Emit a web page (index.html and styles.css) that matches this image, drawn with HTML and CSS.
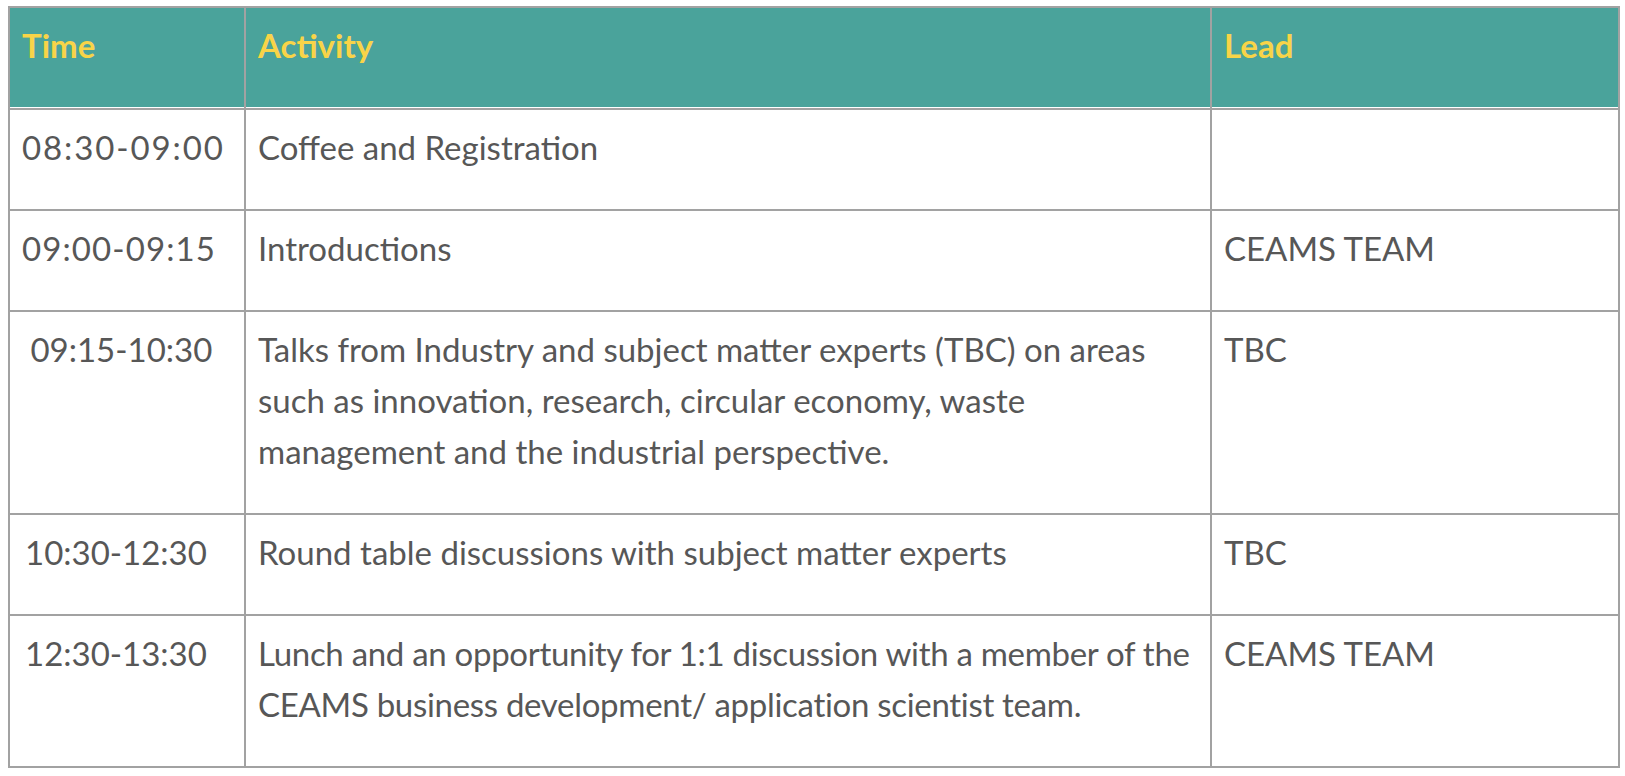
FILE: index.html
```html
<!DOCTYPE html>
<html lang="en">
<head>
<meta charset="utf-8">
<title>Agenda</title>
<link rel="stylesheet" href="styles.css">
</head>
<body>
<table class="agenda">
  <colgroup>
    <col class="col-time">
    <col class="col-activity">
    <col class="col-lead">
  </colgroup>
  <thead>
    <tr>
      <th>Time</th>
      <th>Activity</th>
      <th>Lead</th>
    </tr>
  </thead>
  <tbody>
    <tr>
      <td class="time-wide">08:30-09:00</td>
      <td>Coffee and Registration</td>
      <td></td>
    </tr>
    <tr>
      <td class="time-mid">09:00-09:15</td>
      <td>Introductions</td>
      <td>CEAMS TEAM</td>
    </tr>
    <tr>
      <td>&nbsp;09:15-10:30</td>
      <td>Talks from Industry and subject matter experts (TBC) on areas<br>such as innovation, research, circular economy, waste<br>management and the industrial perspective.</td>
      <td>TBC</td>
    </tr>
    <tr>
      <td class="time-indent">10:30-12:30</td>
      <td>Round table discussions with subject matter experts</td>
      <td>TBC</td>
    </tr>
    <tr>
      <td class="time-indent">12:30-13:30</td>
      <td class="tight">Lunch and an opportunity for 1:1 discussion with a member of the<br>CEAMS business development/ application scientist team.</td>
      <td>CEAMS TEAM</td>
    </tr>
  </tbody>
</table>
</body>
</html>
```

FILE: styles.css
```css
html, body {
  background: #ffffff;
}

body {
  margin: 6px 0 0 8px;
  font-family: Lato, "Noto Sans", sans-serif;
}

.agenda {
  border-collapse: separate;
  border-spacing: 0;
  border-top: 2px solid #a2a2a2;
  border-left: 2px solid #a2a2a2;
  table-layout: fixed;
  width: 1612px;
}

.col-time { width: 236px; }
.col-activity { width: 966px; }
.col-lead { width: 408px; }

.agenda th,
.agenda td {
  border-right: 2px solid #a2a2a2;
  border-bottom: 2px solid #a2a2a2;
  text-align: left;
  vertical-align: top;
  padding: 12px 12px 36px 12px;
  font-size: 33px;
  line-height: 51px;
  white-space: nowrap;
}

.agenda th {
  background: #4aa39b;
  color: #f8d448;
  font-weight: 700;
  box-shadow: inset 0 -1px 0 #ffffff;
  padding-bottom: 37px;
}

.agenda td {
  color: #575757;
  font-weight: 400;
}

.agenda td.time-wide {
  letter-spacing: 1.9px;
}

.agenda td.time-mid {
  letter-spacing: 1.1px;
}

.agenda td.time-indent {
  padding-left: 15px;
}

.agenda td.tight {
  letter-spacing: -0.3px;
}
```
